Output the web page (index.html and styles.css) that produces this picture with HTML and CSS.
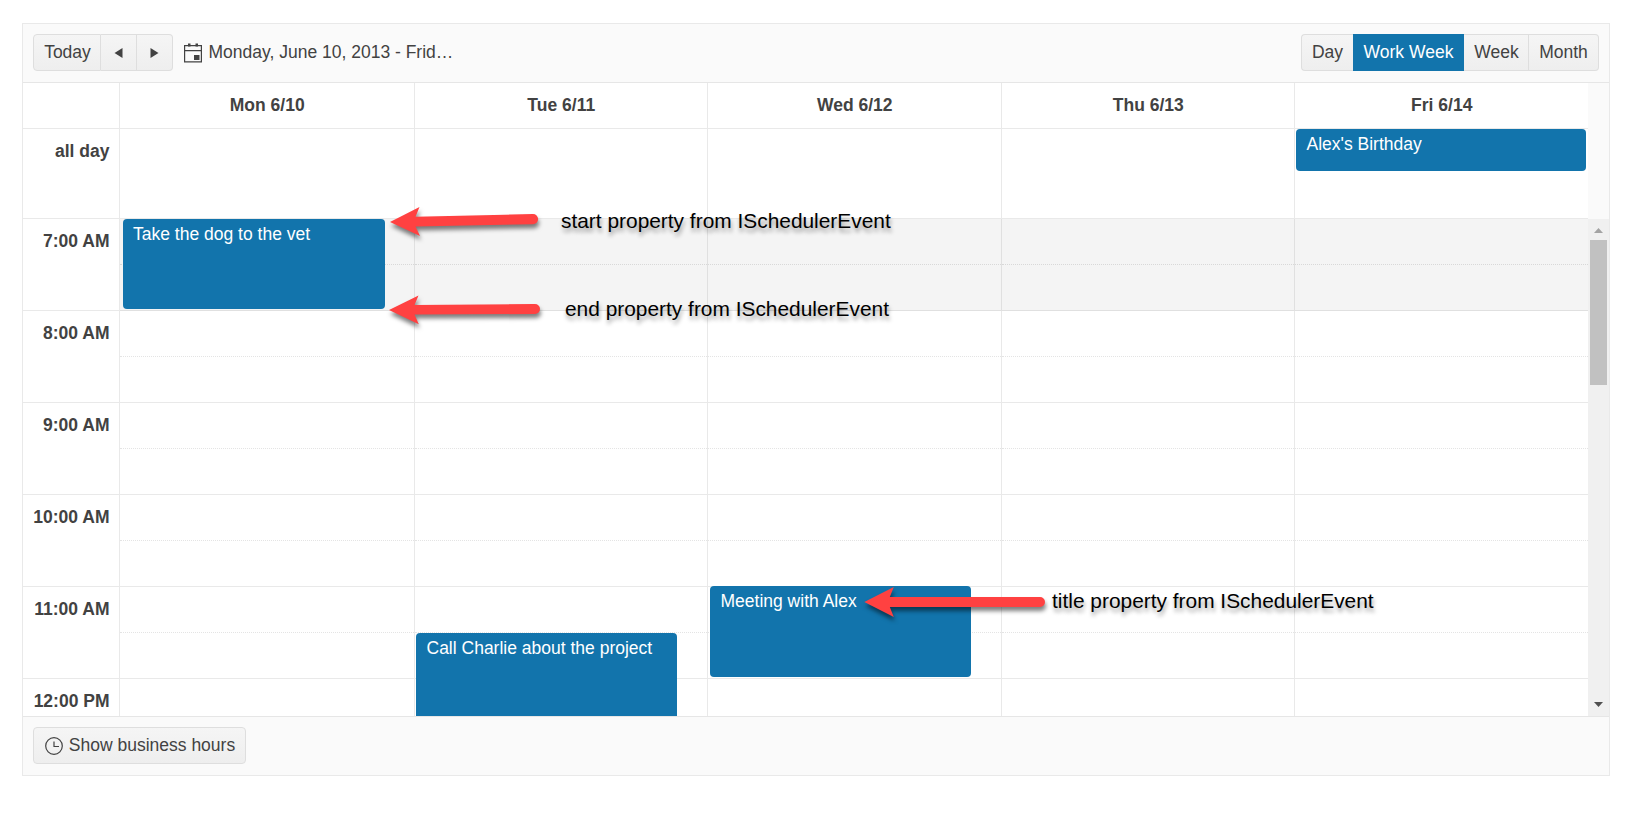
FILE: index.html
```
<!DOCTYPE html>
<html lang="en">
<head>
<meta charset="utf-8">
<title>Scheduler</title>
<link rel="stylesheet" href="styles.css">
</head>
<body>
<div class="scheduler">
  <header class="toolbar">
    <div class="group">
      <button class="btn today">Today</button>
      <button class="btn arrow"><svg width="9" height="10" viewBox="0 0 9 10"><path d="M8.5 0v10L.5 5z"/></svg></button>
      <button class="btn arrow"><svg width="9" height="10" viewBox="0 0 9 10"><path d="M.5 0v10l8-5z"/></svg></button>
    </div>
    <div class="current">
      <svg class="cal" width="18" height="20" viewBox="0 0 18 20"><path fill="none" stroke="currentColor" stroke-width="1.2" d="M.6 2.6h16.8v16.3H.6zM.6 7.6h16.8"/><path fill="currentColor" d="M4 .5h2.500v3H4zM11.500 .5H14v3h-2.500zM10 12h5.500v5H10z"/></svg>
      <span class="range">Monday, June 10, 2013 - Frid…</span>
    </div>
    <div class="group views">
      <button class="btn day">Day</button>
      <button class="btn selected">Work Week</button>
      <button class="btn week">Week</button>
      <button class="btn month">Month</button>
    </div>
  </header>

  <div class="head">
    <div class="row dates"><div class="time"></div><div class="cell">Mon 6/10</div><div class="cell">Tue 6/11</div><div class="cell">Wed 6/12</div><div class="cell">Thu 6/13</div><div class="cell">Fri 6/14</div></div>
    <div class="row allday"><div class="time">all day</div><div class="cell"></div><div class="cell"></div><div class="cell"></div><div class="cell"></div><div class="cell"><div class="event birthday">Alex's Birthday</div></div></div>
  </div>

  <div class="body">
    <div class="grid">
      <div class="row hour off"><div class="time">7:00 AM</div><div class="cell"><div class="event vet">Take the dog to the vet</div></div><div class="cell"></div><div class="cell"></div><div class="cell"></div><div class="cell"></div></div>
      <div class="row hour"><div class="time">8:00 AM</div><div class="cell"></div><div class="cell"></div><div class="cell"></div><div class="cell"></div><div class="cell"></div></div>
      <div class="row hour"><div class="time">9:00 AM</div><div class="cell"></div><div class="cell"></div><div class="cell"></div><div class="cell"></div><div class="cell"></div></div>
      <div class="row hour"><div class="time">10:00 AM</div><div class="cell"></div><div class="cell"></div><div class="cell"></div><div class="cell"></div><div class="cell"></div></div>
      <div class="row hour"><div class="time">11:00 AM</div><div class="cell"></div><div class="cell"><div class="event call">Call Charlie about the project</div></div><div class="cell"><div class="event meeting">Meeting with Alex</div></div><div class="cell"></div><div class="cell"></div></div>
      <div class="row hour"><div class="time">12:00 PM</div><div class="cell"></div><div class="cell"></div><div class="cell"></div><div class="cell"></div><div class="cell"></div></div>
    </div>
    <div class="scrollbar">
      <svg class="up" width="9" height="5" viewBox="0 0 9 5"><path d="M4.500 0L9 5H0z"/></svg>
      <div class="thumb"></div>
      <svg class="down" width="9" height="5" viewBox="0 0 9 5"><path d="M0 0h9L4.500 5z"/></svg>
    </div>
  </div>

  <footer class="footer">
    <button class="btn hours"><svg width="18" height="18" viewBox="0 0 18 18"><path fill="none" stroke="currentColor" stroke-width="1.200" d="M9 .7a8.300 8.300 0 1 1 0 16.600A8.300 8.300 0 0 1 9 .7zM9 4.500v5h5"/></svg>Show business hours</button>
  </footer>
</div>

<svg class="arrows" width="1628" height="816" viewBox="0 0 1628 816">
  <path d="M390 222L419.500 207l-4 9.700L533 214a5 5 0 0 1 0 10.200L415.500 226.500l4.500 9.500z"/>
  <path d="M389 310L418.500 295.500l-4 9.500L535 304a5 5 0 0 1 0 10L414.500 314.500l4.300 9.800z"/>
  <path d="M864.300 602L893.800 587l-4 10H1040a5 5 0 0 1 0 10H889.800l4 10z"/>
</svg>
<div class="note start">start property from ISchedulerEvent</div>
<div class="note end">end property from ISchedulerEvent</div>
<div class="note title">title property from ISchedulerEvent</div>
</body>
</html>
```
FILE: styles.css
```
* { box-sizing: border-box; }
body {
  margin: 0;
  padding: 23px 18px 0 22px;
  height: 816px;
  overflow: hidden;
  position: relative;
  background: #fff;
  color: #424242;
  font: 17.5px/25px "Liberation Sans", Arial, sans-serif;
}
svg { display: block; flex: none; }
.scheduler { width: 1588px; height: 753px; border: 1px solid #e9e9e9; background: #fafafa; display: flex; flex-direction: column; }
.toolbar { height: 59px; border-bottom: 1px solid #e6e6e6; padding: 10px 10px 0; display: flex; align-items: flex-start; }
.group { display: flex; }
.btn {
  height: 37px; margin: 0; padding: 0 0 1px 1px; border: 1px solid #dedede; color: #424242;
  background: linear-gradient(#f5f5f5, #eee); font: inherit; white-space: nowrap;
  display: flex; align-items: center; justify-content: center;
}
.group .btn + .btn { border-left: 0; }
.group .btn:first-child { border-radius: 4px 0 0 4px; }
.group .btn:last-child { border-radius: 0 4px 4px 0; }
.today { width: 68px; }
.arrow { width: 36px; padding: 1px 0 0; }
.arrow svg { fill: #424242; }
.current { height: 37px; display: flex; align-items: center; margin-left: 11px; }
.range { width: 246px; margin: -1px 0 0 6.5px; white-space: nowrap; }
.views { margin-left: auto; }
.day { width: 52px; border-right: 0; padding-left: 0; }
.selected { width: 111px; background: #1274ac; border-color: #1274ac; color: #fff; }
.week { width: 65px; }
.month { width: 70px; padding-left: 0; }

.head { width: 1565px; background: #fff; }
.row { display: grid; grid-template-columns: 97px 295px 293px 294px 293px 293px; }
.row > div { border-right: 1px solid #e9e9e9; border-bottom: 1px solid #e9e9e9; }
.row > div:last-child { border-right: 0; }
.time { font-weight: bold; text-align: right; padding: 10px 9.5px 0 0; }
.dates { height: 46px; font-weight: bold; text-align: center; }
.dates .cell { padding: 10px 0 0 .5px; }
.allday { height: 90px; }
.cell { position: relative; }

.body { height: 497px; display: flex; overflow: hidden; background: #fff; }
.grid { width: 1565px; }
.hour { height: 92px; }
.hour .cell::before { content: ""; position: absolute; left: 0; right: 0; top: 45px; border-top: 1px dotted #e4e4e4; }
.off .cell { background: #f4f4f4; border-color: #e0e0e0; }
.off .cell::before { border-color: #d8d8d8; }
.event { position: absolute; z-index: 1; border-radius: 4px; background: #1274ac; color: #fff; padding: 3px 10px 0 10.5px; white-space: nowrap; }
.birthday { left: 1px; top: 0; width: 290px; height: 42px; }
.vet { left: 3px; top: 0; width: 262px; height: 90px; padding-left: 10px; }
.call { left: 1px; top: 46px; width: 261px; height: 100px; }
.meeting { left: 2px; top: -1px; width: 261px; height: 91px; }

.scrollbar { width: 21px; background: #f0f0f0; padding: 9px 2px; display: flex; flex-direction: column; align-items: center; }
.up { fill: #a3a3a3; }
.thumb { width: 17px; height: 145px; margin-top: 7px; background: #c1c1c1; }
.down { fill: #505050; margin-top: auto; }

.footer { flex: 1; border-top: 1px solid #e6e6e6; padding: 10px; }
.hours { width: 213px; border-radius: 4px; gap: 6px; }
.hours svg { margin-top: 1px; }

/* Annotations laid over the scheduler */
.arrows { position: absolute; left: 0; top: 0; z-index: 2; fill: #ff4141; filter: drop-shadow(1px 4px 2px rgba(0, 0, 0, .5)); }
.note { position: absolute; z-index: 3; color: #000; font-size: 20.9px; white-space: nowrap; text-shadow: 1px 4px 4px rgba(0, 0, 0, .4); }
.start { left: 561px; top: 208px; }
.end { left: 565px; top: 296px; }
.title { left: 1052px; top: 588px; }
```
